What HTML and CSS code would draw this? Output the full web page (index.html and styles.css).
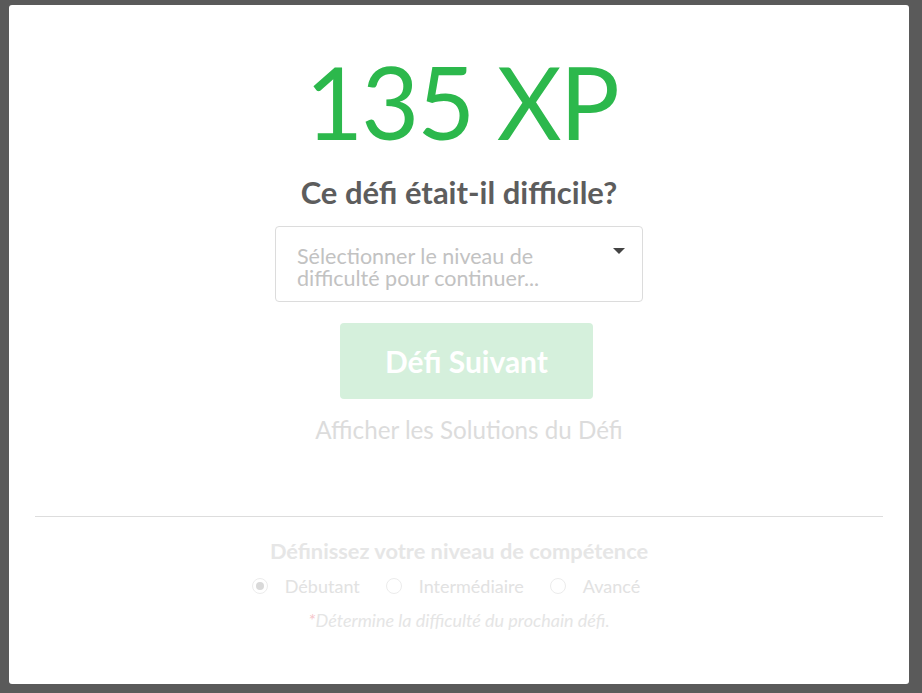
FILE: index.html
```html
<!DOCTYPE html>
<html lang="fr">
<head>
<meta charset="utf-8">
<title>Défi terminé</title>
<link rel="stylesheet" href="styles.css">
</head>
<body>
<div class="backdrop">
  <div class="modal">
    <div class="xp">135 XP</div>
    <h2 class="question">Ce défi était-il difficile?</h2>
    <div class="select">
      <span class="placeholder">Sélectionner le niveau de difficulté pour continuer...</span>
      <span class="caret"></span>
    </div>
    <button class="next" disabled>Défi Suivant</button>
    <a class="solutions">Afficher les Solutions du Défi</a>
    <hr class="divider">
    <div class="skill">
      <h3 class="skill-title">Définissez votre niveau de compétence</h3>
      <div class="radios">
        <label class="radio"><span class="dot checked"></span>Débutant</label>
        <label class="radio"><span class="dot"></span>Intermédiaire</label>
        <label class="radio"><span class="dot"></span>Avancé</label>
      </div>
      <p class="note"><span class="star">*</span>Détermine la difficulté du prochain défi.</p>
    </div>
  </div>
</div>
</body>
</html>
```

FILE: styles.css
```css
html, body {
  margin: 0;
  padding: 0;
  height: 100%;
}
body {
  background: #5a5a5a;
  font-family: Lato, "Open Sans", sans-serif;
}
.backdrop {
  padding: 5px 13px 9px 9px;
  height: 100%;
  box-sizing: border-box;
}
.modal {
  background: #fff;
  width: 900px;
  height: 679px;
  border-radius: 3px;
  box-sizing: border-box;
  padding: 46px 26px 0;
  display: flex;
  flex-direction: column;
  align-items: center;
}
.xp {
  color: #2cb84c;
  font-size: 100px;
  line-height: 100px;
  letter-spacing: -2px;
  font-weight: 400;
  margin-left: 5px;
}
.question {
  margin: 23px 0 0;
  color: #5d5d5d;
  font-size: 31px;
  line-height: 36px;
  font-weight: 700;
}
.select {
  margin-top: 16px;
  width: 368px;
  height: 76px;
  box-sizing: border-box;
  border: 1px solid #dcdcdc;
  border-radius: 4px;
  padding: 18px 17px 0 21px;
  display: flex;
  justify-content: space-between;
  align-items: flex-start;
}
.placeholder {
  color: #c2c2c2;
  font-size: 21.5px;
  line-height: 22px;
  width: 300px;
}
.caret {
  margin-top: 3px;
  width: 0;
  height: 0;
  border-left: 6px solid transparent;
  border-right: 6px solid transparent;
  border-top: 6px solid #444;
}
.next {
  margin-top: 21px;
  width: 253px;
  height: 76px;
  border: 0;
  border-radius: 4px;
  background: #d5f0dc;
  color: #fff;
  font-family: Lato, sans-serif;
  font-weight: 700;
  font-size: 30px;
  margin-left: 15px;
}
.solutions {
  margin-top: 17px;
  color: #dcdcdc;
  font-size: 24.2px;
  line-height: 28px;
  margin-left: 20px;
}
.divider {
  align-self: stretch;
  border: 0;
  border-top: 1px solid #dddddd;
  margin: 72px 0 0;
}
.skill {
  display: flex;
  flex-direction: column;
  align-items: center;
}
.skill-title {
  margin: 20px 0 0;
  color: #e6e6e6;
  font-size: 21.8px;
  line-height: 28px;
  font-weight: 700;
}
.radios {
  margin-top: 10px;
  display: flex;
  gap: 26px;
  padding-right: 26px;
}
.radio {
  display: flex;
  align-items: center;
  gap: 17px;
  color: #e2e2e2;
  font-size: 18px;
  line-height: 22px;
}
.dot {
  width: 16px;
  height: 16px;
  box-sizing: border-box;
  border: 1px solid #ececec;
  border-radius: 50%;
  position: relative;
}
.dot.checked::after {
  content: "";
  position: absolute;
  left: 3px;
  top: 3px;
  width: 8px;
  height: 8px;
  border-radius: 50%;
  background: #d9d9d9;
}
.note {
  margin: 12px 0 0;
  color: #e5e5e5;
  font-style: italic;
  font-size: 18px;
  line-height: 22px;
}
.star {
  color: #f6c6cb;
}
```
